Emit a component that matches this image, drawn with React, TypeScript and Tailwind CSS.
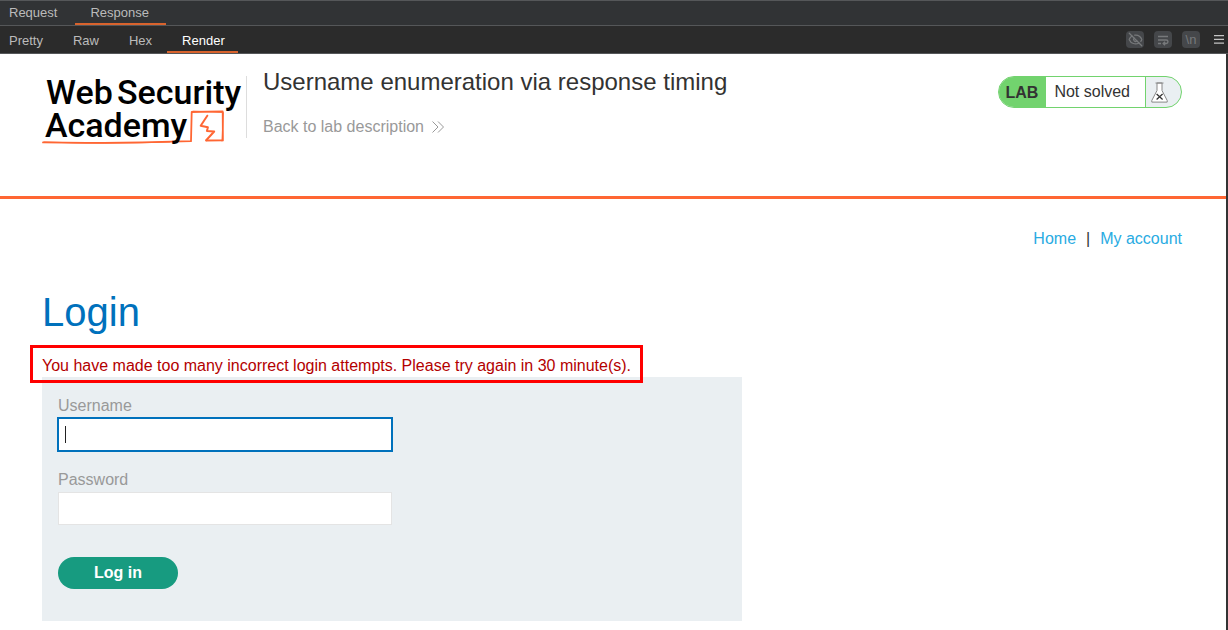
import { EyeOff } from "lucide-react";
import { clsx } from "clsx";

const messageTabs = ["Request", "Response"];
const viewTabs = ["Pretty", "Raw", "Hex", "Render"];

function InspectorBar() {
  return (
    <div className="shrink-0 text-[13px] text-[#bbbbbb]">
      <div className="flex h-[26px] border-y border-[#555759] bg-[#313335]">
        {messageTabs.map((tab) => (
          <button
            key={tab}
            className={clsx(
              "border-b-2 pt-[2px] pr-[18px] pl-[15px] first:pl-[9px] last:pr-[17px]",
              tab === "Response" ? "border-[#d9632d]" : "border-transparent"
            )}
          >
            {tab}
          </button>
        ))}
      </div>
      <div className="flex h-7 items-stretch justify-between border-b border-[#555759] bg-[#2b2b2b] pr-1">
        <div className="flex">
          {viewTabs.map((tab) => (
            <button
              key={tab}
              className={clsx(
                "border-b-2 px-[15px] pt-1 first:pl-[9px] last:pr-[13px]",
                tab === "Render" ? "border-[#d9632d] text-white" : "border-transparent"
              )}
            >
              {tab}
            </button>
          ))}
        </div>
        <div className="flex items-center gap-[10px] text-[#77797b]">
          <button aria-label="Hide" className="flex h-[17px] w-[18px] items-center justify-center rounded bg-[#45474a]">
            <EyeOff size={15} strokeWidth={2} />
          </button>
          <button aria-label="Wrap lines" className="flex h-[17px] w-[18px] items-center justify-center rounded bg-[#45474a]">
            <svg width="12" height="12" viewBox="0 0 12 12" fill="none" stroke="currentColor" strokeWidth="1.4">
              <path d="M1 2.5h10M1 6h8.2a1.7 1.7 0 0 1 0 3.5H6.5M1 9.5h3M8 7.7 6.2 9.5 8 11.3" />
            </svg>
          </button>
          <button className="flex h-[17px] w-[18px] items-center justify-center rounded bg-[#45474a] text-[13px] leading-4">
            \n
          </button>
          <button aria-label="Menu" className="ml-1 text-[#c4c4c4]">
            <svg width="10" height="9" viewBox="0 0 10 9" fill="currentColor">
              <path d="M0 0h10v1.3H0zM0 3.7h10V5H0zM0 7.4h10v1.3H0z" />
            </svg>
          </button>
        </div>
      </div>
    </div>
  );
}

function AcademyLogo() {
  return (
    <svg width="200" height="74" viewBox="0 0 200 74" className="shrink-0 overflow-visible" role="img" aria-label="Web Security Academy">
      <g className="font-['Roboto',sans-serif] text-[34px] font-medium" fill="#000">
        <text x="4" y="28">Web</text>
        <text x="75" y="28">Security</text>
      </g>
      <g fill="none" stroke="#ff6633" strokeLinejoin="round" strokeLinecap="round">
        <path strokeWidth="1.8" d="M1 66.4 Q55 67.4 120 65.8 L149 65.2 L149.7 36 L180.7 35.4 L180.9 64.4 L164.2 64.5" />
        <path strokeWidth="1" d="M2 66 Q60 68.2 128 66M151 35.2 L181.3 36.4 L180 65" />
        <path strokeWidth="2" d="M165.3 39.7 L158.7 49.7 L165.9 51.3 L164.9 54.9 L172.2 55.5 L164.2 64.2" />
      </g>
      <text x="3" y="61" className="font-['Roboto',sans-serif] text-[34px] font-medium" fill="#000">
        Academy
      </text>
    </svg>
  );
}

function LabStatus() {
  return (
    <div className="flex h-8 shrink-0 overflow-hidden rounded-full border border-[#72d36e] bg-[#eaeff2]">
      <span className="bg-[#72d36e] pr-2 pl-[7px] font-bold leading-[31px]">LAB</span>
      <span className="border-r border-[#72d36e] bg-white px-2 pr-[15px] leading-[29px]">Not solved</span>
      <span className="flex w-[35px] items-center pl-[5px]">
        <svg width="17" height="21" viewBox="0 0 17 21" fill="none">
          <path d="M6 1v7.5L.8 18.5v1.6h15.4v-1.6L11 8.5V1z" fill="#fff" stroke="#888" />
          <path d="M4.5 1h8" stroke="#888" />
          <path d="M5.6 12l6 5.4M11.6 12l-6 5.4" stroke="#333" strokeWidth="1.3" />
        </svg>
      </span>
    </div>
  );
}

function LoginForm() {
  return (
    <form className="w-full max-w-[700px] bg-[#eaeff2] p-4 pb-8" onSubmit={(e) => e.preventDefault()}>
      <label htmlFor="username" className="block leading-[25px] text-[#999999]">
        Username
      </label>
      <div className="relative mb-4 w-1/2">
        <input
          id="username"
          type="text"
          className="block h-[33px] w-full border border-[#0071bc] bg-white px-[7px] ring-1 ring-[#0071bc] outline-none"
        />
        {/* text cursor */}
        <span className="pointer-events-none absolute top-2 left-[7px] h-[17px] w-px bg-[#222222]" />
      </div>
      <label htmlFor="password" className="block leading-[25px] text-[#999999]">
        Password
      </label>
      <input
        id="password"
        type="password"
        className="block h-[33px] w-1/2 border border-[#e4e4e4] bg-white px-[7px] outline-none"
      />
      <button type="submit" className="mt-8 block h-8 w-[120px] rounded-full bg-[#179b80] font-bold text-white">
        Log in
      </button>
    </form>
  );
}

export default function App() {
  return (
    <div className="flex min-h-screen flex-col bg-white font-['Liberation_Sans',Arial,sans-serif] text-base text-[#333332]">
      <InspectorBar />
      <div className="flex-1 border-r-2 border-[#333333]">
        <header className="flex h-[145px] items-start border-b-3 border-[#ff6633] pt-[22px] pr-11 pl-[42px]">
          <AcademyLogo />
          <div className="ml-1 h-[62px] w-px shrink-0 bg-[#dddddd]" />
          <div className="ml-4 flex-1">
            <h2 className="-mt-2 text-[24px] leading-7">Username enumeration via response timing</h2>
            <a href="#description" className="mt-[19px] inline-flex items-center gap-2 leading-6 text-[#999999]">
              Back to lab description
              <svg width="12" height="12" viewBox="0 0 12 12" fill="none" stroke="#999">
                <path d="M0.5 0.5 6 6 0.5 11.5M6 0.5 11.5 6 6 11.5" />
              </svg>
            </a>
          </div>
          <LabStatus />
        </header>
        <main className="pr-11 pl-[42px]">
          <nav className="flex justify-end gap-[10px] pt-7 leading-6">
            <a href="#home" className="text-[#29abe2]">Home</a>
            <span>|</span>
            <a href="#account" className="text-[#29abe2]">My account</a>
          </nav>
          <h1 className="mt-9 text-[40px] leading-[50px] text-[#0071bc]">Login</h1>
          <p className="relative mt-4 w-fit pt-px leading-[23px] text-[#b30000]">
            You have made too many incorrect login attempts. Please try again in 30 minute(s).
            <span className="pointer-events-none absolute -inset-x-3 -top-2 -bottom-[6px] border-3 border-[#ff0000]" />
          </p>
          <LoginForm />
        </main>
      </div>
    </div>
  );
}
